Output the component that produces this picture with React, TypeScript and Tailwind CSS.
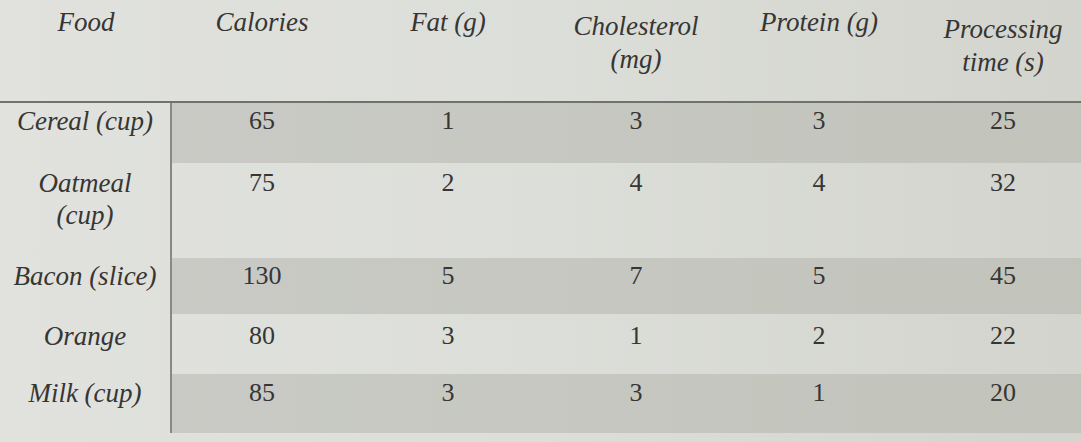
import React from "react";

const cols = ["w-[180px]", "w-[192px]", "w-[184px]", "w-[182px]", "w-[186px]"];

const rows: { food: string[]; vals: string[]; h: string; pt: string; shaded: boolean }[] = [
  { food: ["Cereal (cup)"], vals: ["65", "1", "3", "3", "25"], h: "h-[60px]", pt: "pt-[2px]", shaded: true },
  { food: ["Oatmeal", "(cup)"], vals: ["75", "2", "4", "4", "32"], h: "h-[95px]", pt: "pt-[4px]", shaded: false },
  { food: ["Bacon (slice)"], vals: ["130", "5", "7", "5", "45"], h: "h-[56px]", pt: "pt-[2px]", shaded: true },
  { food: ["Orange"], vals: ["80", "3", "1", "2", "22"], h: "h-[60px]", pt: "pt-[6px]", shaded: false },
  { food: ["Milk (cup)"], vals: ["85", "3", "3", "1", "20"], h: "h-[59px]", pt: "pt-[3px]", shaded: true },
];

const headers: { lines: string[]; pt: string }[] = [
  { lines: ["Calories"], pt: "pt-[6px]" },
  { lines: ["Fat (g)"], pt: "pt-[6px]" },
  { lines: ["Cholesterol", "(mg)"], pt: "pt-[10px]" },
  { lines: ["Protein (g)"], pt: "pt-[6px]" },
  { lines: ["Processing", "time (s)"], pt: "pt-[13px]" },
];

export default function App() {
  return (
    <div
      className="w-[1081px] h-[442px] overflow-hidden bg-gradient-to-r from-[#e1e2de] via-[#dcded9] to-[#d3d4cd] text-[#363634]"
      style={{ fontFamily: '"Liberation Serif", "Times New Roman", serif' }}
    >
      <div className="flex w-[1096px] h-[103px] border-b-2 border-[#70726e] italic text-[27px] leading-[33px]">
        <div className="w-[172px] shrink-0 text-center pt-[6px]">Food</div>
        {headers.map((h, i) => (
          <div key={i} className={`${cols[i]} shrink-0 text-center ${h.pt}`}>
            {h.lines.map((l) => (
              <div key={l}>{l}</div>
            ))}
          </div>
        ))}
      </div>
      {rows.map((r, ri) => (
        <div key={ri} className={`flex w-[1096px] ${r.h}`}>
          <div
            className={`w-[172px] shrink-0 border-r-2 border-[#878985] text-center italic text-[27px] leading-[32px] ${r.pt}`}
          >
            {r.food.map((f) => (
              <div key={f}>{f}</div>
            ))}
          </div>
          <div
            className={`flex ${
              r.shaded ? "bg-gradient-to-r from-[#c9cac5] to-[#c2c4bb]" : ""
            }`}
          >
            {r.vals.map((v, i) => (
              <div
                key={i}
                className={`${cols[i]} shrink-0 text-center text-[26px] leading-[32px] ${r.pt}`}
              >
                {v}
              </div>
            ))}
          </div>
        </div>
      ))}
    </div>
  );
}
